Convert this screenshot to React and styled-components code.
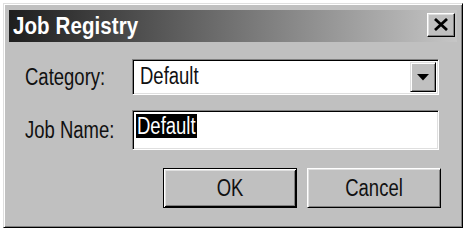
import React from "react";
import styled, { createGlobalStyle } from "styled-components";

const GlobalStyle = createGlobalStyle`
  html, body {
    margin: 0;
    padding: 0;
    background: #ffffff;
  }
  body {
    font-family: "Liberation Sans", Arial, sans-serif;
  }
`;

const Window = styled.div`
  box-sizing: border-box;
  margin: 3px 0 0 3px;
  width: 460px;
  height: 225px;
  background: #c0c0c0;
  border: 1px solid;
  border-color: #dfdfdf #000 #000 #dfdfdf;
  box-shadow: inset 1px 1px #fff, inset -1px -1px #808080;
  padding: 6px 5px 5px 5px;
`;

const TitleBar = styled.div`
  height: 32px;
  display: flex;
  justify-content: space-between;
  align-items: center;
  padding: 0 2px 0 4px;
  background: linear-gradient(to right, #1e1e1e, #c6c6c6);
`;

const TitleText = styled.span`
  display: inline-block;
  color: #fff;
  font-weight: bold;
  font-size: 20.5px;
  transform: scaleY(1.15);
  letter-spacing: 0.1px;
`;

const CloseButton = styled.div`
  box-sizing: border-box;
  align-self: flex-start;
  margin-top: 3px;
  width: 28px;
  height: 24px;
  background: #c0c0c0;
  border: 1px solid;
  border-color: #fff #000 #000 #fff;
  box-shadow: inset -1px -1px #808080, inset 1px 1px #dfdfdf;
  display: flex;
  align-items: center;
  justify-content: center;
  padding-bottom: 1px;
`;

const Body = styled.div`
  padding: 17px 16px 0 16px;
`;

const Form = styled.div`
  display: grid;
  grid-template-columns: 107px 307px;
  row-gap: 15px;
  align-items: center;
`;

const Txt = styled.span`
  display: inline-block;
  font-size: 18.5px;
  line-height: 24px;
  transform: scaleY(1.28);
  color: ${(p) => p.$color || "#111"};
  white-space: nowrap;
`;

const Label = styled.div`
  display: flex;
  align-items: center;
`;

const Sunken = styled.div`
  box-sizing: border-box;
  background: #fff;
  border: 1px solid;
  border-color: #808080 #fff #fff #808080;
  box-shadow: inset 1px 1px #000, inset -1px -1px #dfdfdf;
`;

const Combo = styled(Sunken)`
  height: 36px;
  display: flex;
  align-items: center;
  justify-content: space-between;
  padding: 2px;
`;

const ComboValue = styled.div`
  padding-left: 5px;
  padding-bottom: 2px;
`;

const DropButton = styled.div`
  box-sizing: border-box;
  width: 26px;
  height: 30px;
  background: #c0c0c0;
  border: 1px solid;
  border-color: #dfdfdf #000 #000 #dfdfdf;
  box-shadow: inset 1px 1px #fff, inset -1px -1px #808080;
  display: flex;
  align-items: center;
  justify-content: center;
`;

const TextBox = styled(Sunken)`
  height: 40px;
  padding: 3px;
`;

const Highlight = styled.span`
  display: inline-block;
  background: #000;
  height: 24px;
  padding: 0 1px 0 1px;
`;

const ButtonRow = styled.div`
  display: flex;
  justify-content: flex-end;
  gap: 10px;
  margin-top: 18px;
`;

const Button = styled.div`
  box-sizing: border-box;
  width: 134px;
  height: 40px;
  background: #c0c0c0;
  display: flex;
  align-items: center;
  justify-content: center;
  border: 1px solid;
  border-color: ${(p) => (p.$default ? "#000" : "#fff #000 #000 #fff")};
  box-shadow: ${(p) =>
    p.$default
      ? "inset 1px 1px #fff, inset -1px -1px #000, inset 2px 2px #dfdfdf, inset -2px -2px #808080"
      : "inset 1px 1px #dfdfdf, inset -1px -1px #808080"};
`;

const CloseIcon = () => (
  <svg width="16" height="13" viewBox="0 0 16 13">
    <path d="M2 1 L14 12 M14 1 L2 12" stroke="#000" strokeWidth="2.8" />
  </svg>
);

const ArrowIcon = () => (
  <svg width="12" height="7" viewBox="0 0 12 7">
    <polygon points="0,0 12,0 6,6.5" fill="#000" />
  </svg>
);

export default function App() {
  return (
    <>
      <GlobalStyle />
      <Window>
        <TitleBar>
          <TitleText>Job Registry</TitleText>
          <CloseButton>
            <CloseIcon />
          </CloseButton>
        </TitleBar>
        <Body>
          <Form>
            <Label>
              <Txt>Category:</Txt>
            </Label>
            <Combo>
              <ComboValue>
                <Txt>Default</Txt>
              </ComboValue>
              <DropButton>
                <ArrowIcon />
              </DropButton>
            </Combo>
            <Label>
              <Txt>Job Name:</Txt>
            </Label>
            <TextBox>
              <Highlight>
                <Txt $color="#fff">Default</Txt>
              </Highlight>
            </TextBox>
          </Form>
          <ButtonRow>
            <Button $default>
              <Txt>OK</Txt>
            </Button>
            <Button>
              <Txt>Cancel</Txt>
            </Button>
          </ButtonRow>
        </Body>
      </Window>
    </>
  );
}
